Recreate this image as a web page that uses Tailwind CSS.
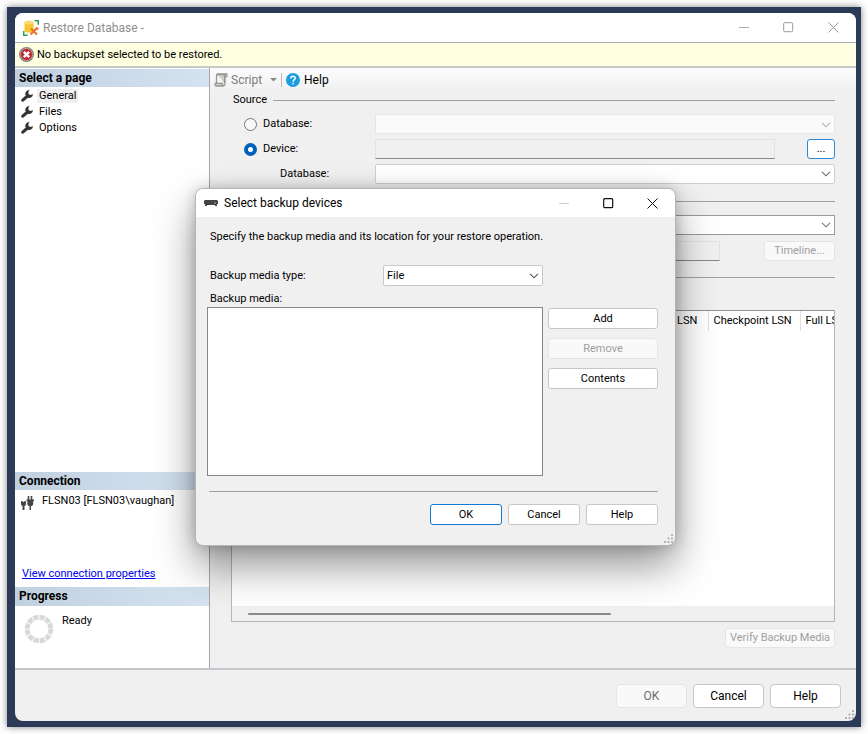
<!DOCTYPE html>
<html lang="en">
<head>
<meta charset="utf-8">
<title>Restore Database</title>
<script src="https://cdn.jsdelivr.net/npm/@tailwindcss/browser@4"></script>
</head>
<body class="bg-white text-black font-[Roboto,'Liberation_Sans',sans-serif] text-[11px] leading-4">
<svg class="hidden">
  <symbol id="wrench" viewBox="0 0 12 12"><path d="M1.800 10.200 6 6.500" stroke="#333" stroke-width="3" stroke-linecap="round"/><path d="M8.500.3a3.700 3.700 0 0 0-4.200 4.500L6.800 7.800a3.700 3.700 0 0 0 5-3.700L9.800 5 7.600 4.300 7.400 2.200Z" fill="#333"/></symbol>
  <symbol id="chev" viewBox="0 0 10 6"><path d="M1 .8 5 4.800 9 .8" fill="none" stroke="currentColor" stroke-width="1.100"/></symbol>
  <symbol id="grip" viewBox="0 0 9 9"><path d="M7 0h2v2H7zM3.500 3.500h2v2h-2zM7 3.500h2v2H7zM0 7h2v2H0zM3.500 7h2v2h-2zM7 7h2v2H7z" fill="#b4b4b4"/></symbol>
</svg>
<div class="min-h-screen p-[7px] flex flex-col">
<div class="flex-1 flex flex-col bg-[#2b3b57] pt-[6px] pb-[6px] pl-2 pr-[5px] shadow-[0_0_7px_rgba(0,0,0,0.5)]">
<div class="flex-1 flex flex-col bg-[#f0f0f0] rounded-lg overflow-hidden relative">

  <header class="h-[29px] bg-white flex items-center pl-2 text-[#8e8e8e] text-[12px]">
    <svg width="16" height="16" viewBox="0 0 16 16"><path d="M11.500.7h3.800v4M.7 11v4.300h4" fill="none" stroke="#2f9e52" stroke-width="1.500"/><path d="M1.500 2.500v8.500c0 2 9 2 9 0V2.500Z" fill="#f8c62c"/><ellipse cx="6" cy="2.500" rx="4.500" ry="1.900" fill="#ffdc70"/><path d="m7.500 14.500 6-6M8 8.500l6 6" stroke="#e8742b" stroke-width="2"/><circle cx="14" cy="8.500" r="1.500" fill="#e8742b"/></svg>
    <h1 class="ml-1 flex-1">Restore Database -</h1>
    <button aria-label="Minimize" class="w-11 h-7 grid place-items-center"><svg width="11" height="11"><path d="M0 5.500h10" stroke="#aaa"/></svg></button>
    <button aria-label="Maximize" class="w-11 h-7 grid place-items-center"><svg width="11" height="11"><rect x=".7" y=".7" width="9" height="9" rx="1" fill="none" stroke="#999"/></svg></button>
    <button aria-label="Close" class="w-[46px] h-7 grid place-items-center"><svg width="11" height="11"><path d="m.5.5 10 10m0-10-10 10" stroke="#999"/></svg></button>
  </header>
  <div class="h-[26px] bg-[#ffffe1] border-t border-[#a9adb8] border-b-2 border-b-[#c5c8c4] flex items-center gap-[3px] pl-1" role="status">
    <svg width="15" height="15" viewBox="0 0 15 15"><circle cx="7.500" cy="7.500" r="7.500" fill="#808080"/><circle cx="7.500" cy="7.500" r="6" fill="#c3262d" stroke="#ccc" stroke-width=".6"/><path d="m4.800 4.800 5.400 5.400m0-5.400-5.400 5.400" stroke="#fff" stroke-width="2.400"/></svg>
    <span>No backupset selected to be restored.</span>
  </div>

  <div class="flex-1 flex border-b-2 border-[#c7c8cd]">
    <aside class="w-[195px] shrink-0 bg-white border-r border-[#a3a6ad] flex flex-col">
      <h2 class="h-[18px] mt-px pl-1 font-bold text-[12px] leading-[18px] bg-linear-to-r from-[#c1d0df] to-[#d5e3f1]">Select a page</h2>
      <nav class="flex-1 flex flex-col pl-[6px] pt-px">
        <a href="#" class="flex items-center gap-[4px] h-4"><svg width="12" height="12"><use href="#wrench"/></svg><span class="bg-[#f0f0f0] px-[2px] leading-[14px]">General</span></a>
        <a href="#" class="flex items-center gap-[4px] h-4"><svg width="12" height="12"><use href="#wrench"/></svg><span class="px-[2px]">Files</span></a>
        <a href="#" class="flex items-center gap-[4px] h-4"><svg width="12" height="12"><use href="#wrench"/></svg><span class="px-[2px]">Options</span></a>
      </nav>
      <h2 class="h-[18px] pl-1 font-bold text-[12px] leading-[18px] bg-linear-to-r from-[#c1d0df] to-[#d5e3f1]">Connection</h2>
      <div class="flex items-start gap-2 pl-[6px] pt-[3px] h-[76px]">
        <svg class="mt-[3px]" width="13" height="14" viewBox="0 0 13 14"><path d="M7.500 0v4m3-4v4M1 5v2m3-2v2" stroke="#444" stroke-width="1.600"/><path d="M5.500 3.500H13V5h-.8v3q0 2-2.200 2.300V14H8.500v-3.700Q6.300 10 6.300 8V5h-.8zM0 6h5v2q0 1.500-1.500 2v4h-2v-4Q0 9.500 0 8z" fill="#444"/></svg>
        <span>FLSN03 [FLSN03\vaughan]</span>
      </div>
      <a href="#" class="text-[#0000ee] underline pl-[7px] h-[21px]">View connection properties</a>
      <h2 class="h-[19px] pl-1 font-bold text-[12px] leading-[19px] bg-linear-to-r from-[#c1d0df] to-[#d5e3f1]">Progress</h2>
      <div class="h-[62px] flex items-start pl-[9px] pt-[7px] gap-2">
        <svg class="mt-px" width="30" height="30" viewBox="0 0 30 30"><circle cx="15" cy="15" r="11.800" fill="none" stroke="#d9d9d9" stroke-width="5" stroke-dasharray="5.180 1" /></svg>
        <span>Ready</span>
      </div>
    </aside>

    <main class="flex-1 min-w-0 flex flex-col">
      <div class="h-6 flex items-center pl-1 text-[12px] bg-linear-to-b from-[#fcfcfc] to-[#f0f0f0]">
        <button class="flex items-center text-[#7c7c7c]"><svg width="14" height="14" viewBox="0 0 14 14"><path d="M3.500 1h9.300v2.500H11v6.800M3.500 1q-1 0-1 2v7M1 10.300h7.500V13H2q-1.300-1-1-2.700M8.500 13q2.500 0 2.500-2.500M3 1.500h7.500v8.500" fill="#d0d0d0" stroke="#949494" stroke-width="1.300"/></svg><span class="ml-[3px]">Script</span><svg class="ml-2" width="7" height="4"><path d="M0 0h7L3.500 3.500z" fill="#8a8a8a"/></svg></button>
        <span class="w-px h-[14px] bg-[#bdbdbd] mx-1"></span>
        <button class="flex items-center gap-1"><svg width="14" height="14" viewBox="0 0 14 14"><circle cx="7" cy="7" r="7" fill="#1b9de2"/><path d="M4.800 5.500C4.800 2.500 9.400 2.700 9.300 5.300 9.200 6.800 7.100 6.700 7.100 8.700M7.100 9.800v1.500" fill="none" stroke="#fff" stroke-width="1.500"/></svg>Help</button>
      </div>
      <div class="flex-1 flex flex-col pl-[21px] pr-[21px]">
        <div class="flex items-center gap-[6px] h-4 pl-[2px]"><h3>Source</h3><span class="flex-1 h-px bg-[#a0a0a0]"></span></div>
        <div class="grid grid-cols-[144px_1fr] items-center mt-[6px] gap-y-[5px]">
          <label class="flex items-center gap-[6px] pl-[13px]"><input type="radio" name="src" class="appearance-none size-[13px] rounded-full border border-[#777] bg-[#f8f8f8]">Database:</label>
          <div class="relative"><select aria-label="Source database" disabled class="appearance-none block w-full h-5 bg-[#fafafa] border border-[#e6e6e6] rounded-[2px]"></select><svg class="absolute right-1 top-[8px] text-[#b0b0b0]" width="10" height="6"><use href="#chev"/></svg></div>
          <label class="flex items-center gap-[6px] pl-[13px]"><input type="radio" name="src" checked class="appearance-none size-[13px] rounded-full border-4 border-[#005fb8] bg-white">Device:</label>
          <div class="flex items-center gap-8"><input aria-label="Device" readonly class="flex-1 min-w-0 h-5 bg-[#f0f0f0] border border-[#e2e2e2] border-b-[#868686]"><button class="w-7 h-5 bg-white border border-[#2b88d8] rounded-[3px] leading-4">...</button></div>
          <label for="db2" class="pl-[49px]">Database:</label>
          <div class="relative"><select id="db2" class="appearance-none block w-full h-5 bg-white border border-[#cfcfcf] rounded-[2px]"></select><svg class="absolute right-1 top-[7px] text-[#666]" width="10" height="6"><use href="#chev"/></svg></div>
        </div>
        <div class="h-px bg-[#a0a0a0] mt-[17px]"></div>
        <div class="grid grid-cols-[144px_1fr] items-center mt-[13px] gap-y-[6px]">
          <div class="relative col-start-2"><select aria-label="Destination database" class="appearance-none block w-full h-5 bg-white border border-[#999]"></select><svg class="absolute right-1 top-[7px] text-[#777]" width="10" height="6"><use href="#chev"/></svg></div>
          <div class="flex items-center gap-11 col-start-2"><input aria-label="Restore to" readonly class="flex-1 min-w-0 h-5 bg-[#f0f0f0] border border-[#e2e2e2] border-b-[#868686]"><button disabled class="w-[71px] h-5 bg-[#f9f9f9] border border-[#e5e5e5] rounded-[3px] text-[#a0a0a0]">Timeline...</button></div>
        </div>
        <div class="h-px bg-[#a0a0a0] mt-4"></div>
        <div class="flex-1 mt-8 bg-white border border-[#b4b6bb] border-t-[#8f9196] flex flex-col overflow-hidden">
          <div class="flex-1 flex justify-end overflow-hidden">
            <table class="table-fixed w-[163px] shrink-0 self-start text-left">
              <thead><tr class="h-5"><th class="w-[37px] font-normal border-r border-[#e0e0e0] p-0 pl-[6px]">LSN</th><th class="w-[92px] font-normal border-r border-[#e0e0e0] p-0 pl-[5px]">Checkpoint LSN</th><th class="font-normal p-0 pl-[5px] whitespace-nowrap overflow-hidden">Full LSN</th></tr></thead>
            </table>
          </div>
          <div class="h-[15px] bg-[#f0f0f0] flex items-center pl-4"><span class="w-[62%] h-[2px] bg-[#8a8a8a] rounded"></span></div>
        </div>
        <div class="h-[46px] pt-[6px] flex justify-end items-start"><button disabled class="w-[110px] h-5 bg-[#f9f9f9] border border-[#e5e5e5] rounded-[3px] text-[#a0a0a0]">Verify Backup Media</button></div>
      </div>
    </main>
  </div>

  <footer class="h-[51px] flex justify-end items-center gap-[6px] pr-[15px] text-[12px]">
    <button disabled class="w-[71px] h-6 bg-[#f9f9f9] border border-[#e5e5e5] rounded-[4px] text-[#6d6d6d]">OK</button>
    <button class="w-[71px] h-6 bg-white border border-[#c8c8c8] rounded-[4px]">Cancel</button>
    <button class="w-[71px] h-6 bg-white border border-[#c8c8c8] rounded-[4px]">Help</button>
  </footer>
  <svg class="absolute right-[2px] bottom-[2px]" width="9" height="9"><use href="#grip"/></svg>
</div>
</div>
</div>

<section role="dialog" aria-labelledby="dt" class="absolute left-[195px] top-[188px] w-[481px] bg-[#f0f0f0] border border-[#b5b5b5] rounded-lg overflow-hidden shadow-[0_20px_40px_rgba(0,0,0,0.42),0_0_14px_rgba(0,0,0,0.2)]">
  <header class="h-7 bg-white flex items-center pl-2 text-[12px]">
    <svg width="14" height="6"><path d="M1 0h12l1 1v3h-1v2h-2V5H3v1H1V4H0V1z" fill="#444"/><path d="M10 3h2" stroke="#aaa"/></svg>
    <h2 id="dt" class="ml-[6px] flex-1">Select backup devices</h2>
    <button aria-label="Minimize" class="w-11 h-7 grid place-items-center"><svg width="11" height="11"><path d="M0 5.500h10" stroke="#ccc"/></svg></button>
    <button aria-label="Maximize" class="w-11 h-7 grid place-items-center"><svg width="11" height="11"><rect x=".7" y=".7" width="9" height="9" rx="1" fill="none" stroke="#111" stroke-width="1.200"/></svg></button>
    <button aria-label="Close" class="w-[45px] h-7 grid place-items-center"><svg width="11" height="11"><path d="m.5.5 10 10m0-10-10 10" stroke="#111"/></svg></button>
  </header>
  <div class="pl-[11px] pr-[17px] pt-3 pb-5">
    <p class="pl-[3px]">Specify the backup media and its location for your restore operation.</p>
    <div class="flex items-center mt-5 pl-[3px]">
      <label for="mt" class="w-[173px]">Backup media type:</label>
      <div class="relative w-40"><select id="mt" class="appearance-none block w-full h-[21px] bg-white border border-[#c8c8c8] rounded-[2px] pl-[3px]"><option>File</option></select><svg class="absolute right-1 top-[8px] text-[#555]" width="10" height="6"><use href="#chev"/></svg></div>
    </div>
    <label for="list" class="block mt-[5px] pl-[3px]">Backup media:</label>
    <div class="flex gap-[5px]">
      <select id="list" size="8" class="flex-1 h-[169px] bg-white border border-[#828790] overflow-hidden"></select>
      <div class="w-[110px] flex flex-col gap-[9px] pt-px">
        <button class="h-[21px] bg-white border border-[#c8c8c8] rounded-[3px]">Add</button>
        <button disabled class="h-[21px] bg-[#f9f9f9] border border-[#e5e5e5] rounded-[3px] text-[#a0a0a0]">Remove</button>
        <button class="h-[21px] bg-white border border-[#c8c8c8] rounded-[3px]">Contents</button>
      </div>
    </div>
    <div class="h-px bg-[#a0a0a0] mt-[15px] ml-[2px]"></div>
    <div class="flex justify-end gap-[6px] mt-3">
      <button class="w-[72px] h-[21px] bg-white border border-[#0f7ad6] rounded-[3px]">OK</button>
      <button class="w-[72px] h-[21px] bg-white border border-[#c8c8c8] rounded-[3px]">Cancel</button>
      <button class="w-[72px] h-[21px] bg-white border border-[#c8c8c8] rounded-[3px]">Help</button>
    </div>
  </div>
  <svg class="absolute right-[2px] bottom-[2px]" width="9" height="9"><use href="#grip"/></svg>
</section>
</body>
</html>
